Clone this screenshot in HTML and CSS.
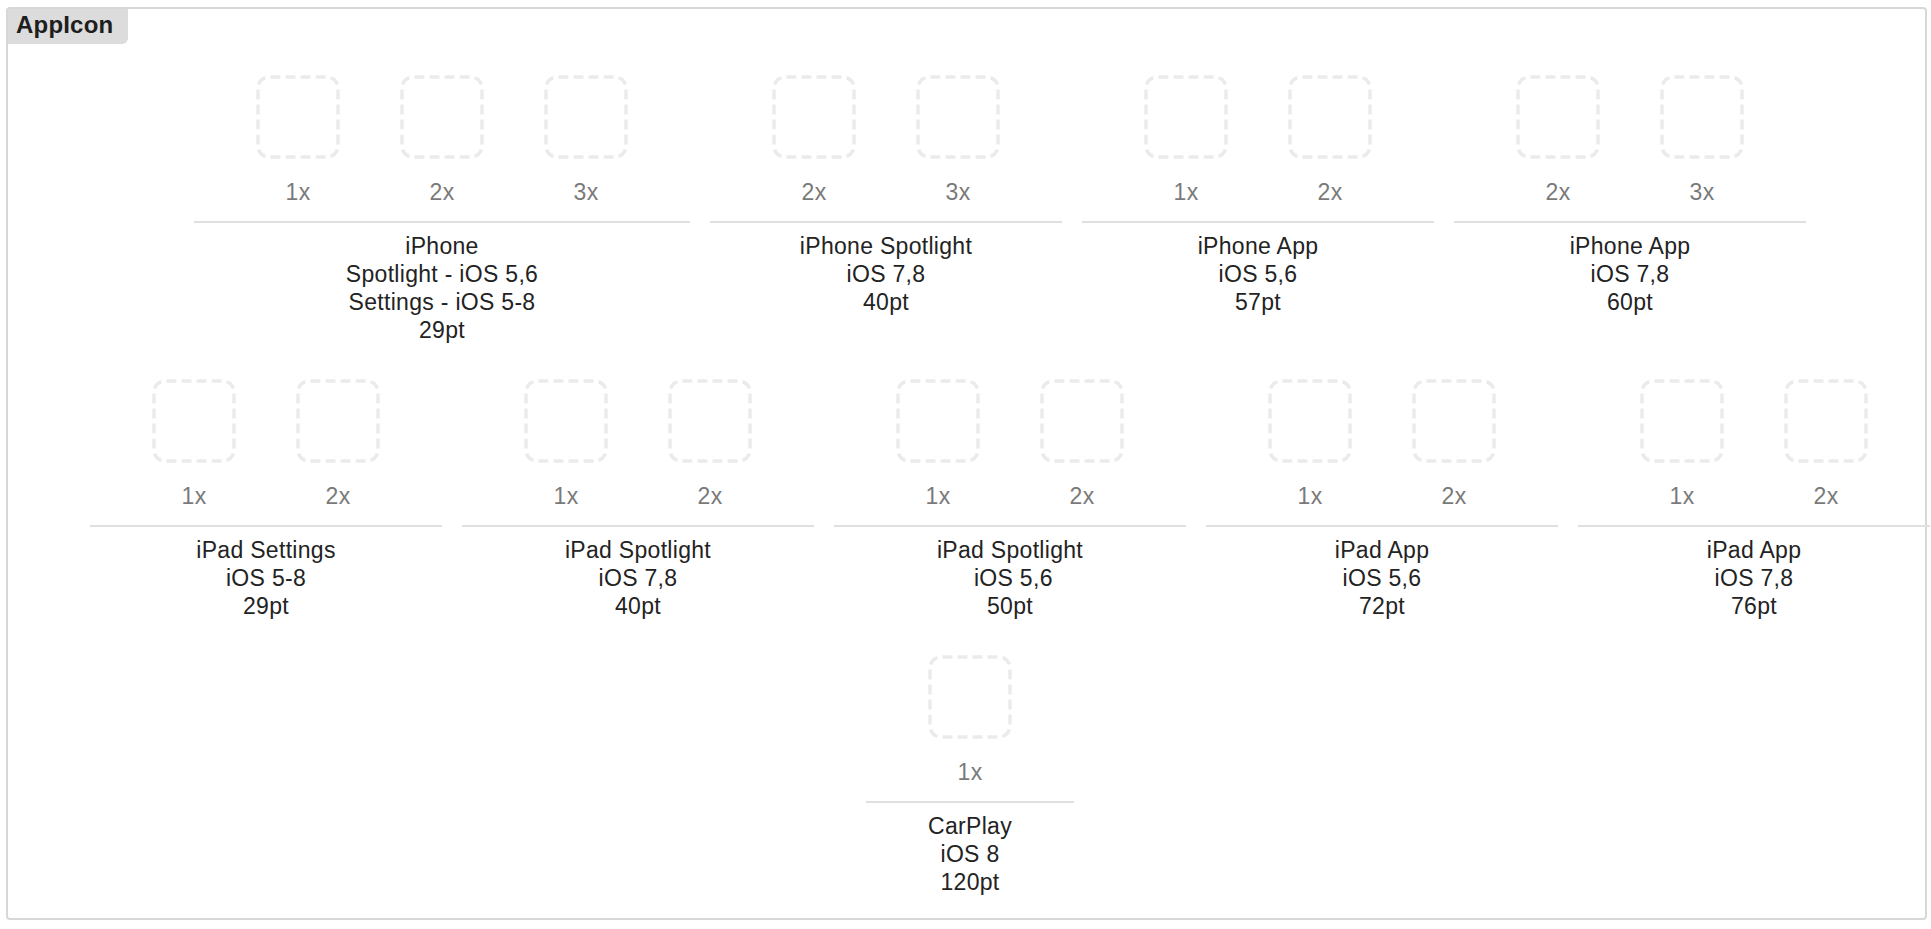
FILE: index.html
```html
<!DOCTYPE html>
<html lang="en">
<head>
<meta charset="utf-8">
<title>AppIcon</title>
<link rel="stylesheet" href="styles.css">
</head>
<body>
<svg class="defs" width="0" height="0" aria-hidden="true">
  <defs>
    <symbol id="ph" viewBox="0 0 84 84">
      <rect x="2" y="2" width="80" height="80" rx="11" ry="11" fill="none" stroke="#ebebeb" stroke-width="3.5" pathLength="304" stroke-dasharray="10 5.2" stroke-dashoffset="13.7"/>
    </symbol>
  </defs>
</svg>
<section class="panel">
  <div class="tab">AppIcon</div>
  <div class="rows">
    <div class="row row-1">
      <div class="group">
        <div class="icons">
          <div class="slot"><svg class="ph"><use href="#ph"/></svg><span class="scale">1x</span></div>
          <div class="slot"><svg class="ph"><use href="#ph"/></svg><span class="scale">2x</span></div>
          <div class="slot"><svg class="ph"><use href="#ph"/></svg><span class="scale">3x</span></div>
        </div>
        <div class="caption">iPhone<br>Spotlight - iOS 5,6<br>Settings - iOS 5-8<br>29pt</div>
      </div>
      <div class="group">
        <div class="icons">
          <div class="slot"><svg class="ph"><use href="#ph"/></svg><span class="scale">2x</span></div>
          <div class="slot"><svg class="ph"><use href="#ph"/></svg><span class="scale">3x</span></div>
        </div>
        <div class="caption">iPhone Spotlight<br>iOS 7,8<br>40pt</div>
      </div>
      <div class="group">
        <div class="icons">
          <div class="slot"><svg class="ph"><use href="#ph"/></svg><span class="scale">1x</span></div>
          <div class="slot"><svg class="ph"><use href="#ph"/></svg><span class="scale">2x</span></div>
        </div>
        <div class="caption">iPhone App<br>iOS 5,6<br>57pt</div>
      </div>
      <div class="group">
        <div class="icons">
          <div class="slot"><svg class="ph"><use href="#ph"/></svg><span class="scale">2x</span></div>
          <div class="slot"><svg class="ph"><use href="#ph"/></svg><span class="scale">3x</span></div>
        </div>
        <div class="caption">iPhone App<br>iOS 7,8<br>60pt</div>
      </div>
    </div>
    <div class="row row-2">
      <div class="group">
        <div class="icons">
          <div class="slot"><svg class="ph"><use href="#ph"/></svg><span class="scale">1x</span></div>
          <div class="slot"><svg class="ph"><use href="#ph"/></svg><span class="scale">2x</span></div>
        </div>
        <div class="caption">iPad Settings<br>iOS 5-8<br>29pt</div>
      </div>
      <div class="group">
        <div class="icons">
          <div class="slot"><svg class="ph"><use href="#ph"/></svg><span class="scale">1x</span></div>
          <div class="slot"><svg class="ph"><use href="#ph"/></svg><span class="scale">2x</span></div>
        </div>
        <div class="caption">iPad Spotlight<br>iOS 7,8<br>40pt</div>
      </div>
      <div class="group">
        <div class="icons">
          <div class="slot"><svg class="ph"><use href="#ph"/></svg><span class="scale">1x</span></div>
          <div class="slot"><svg class="ph"><use href="#ph"/></svg><span class="scale">2x</span></div>
        </div>
        <div class="caption">iPad Spotlight<br>&nbsp;iOS 5,6<br>50pt</div>
      </div>
      <div class="group">
        <div class="icons">
          <div class="slot"><svg class="ph"><use href="#ph"/></svg><span class="scale">1x</span></div>
          <div class="slot"><svg class="ph"><use href="#ph"/></svg><span class="scale">2x</span></div>
        </div>
        <div class="caption">iPad App<br>iOS 5,6<br>72pt</div>
      </div>
      <div class="group">
        <div class="icons">
          <div class="slot"><svg class="ph"><use href="#ph"/></svg><span class="scale">1x</span></div>
          <div class="slot"><svg class="ph"><use href="#ph"/></svg><span class="scale">2x</span></div>
        </div>
        <div class="caption">iPad App<br>iOS 7,8<br>76pt</div>
      </div>
    </div>
    <div class="row row-3">
      <div class="group">
        <div class="icons">
          <div class="slot"><svg class="ph"><use href="#ph"/></svg><span class="scale">1x</span></div>
        </div>
        <div class="caption">CarPlay<br>iOS 8<br>120pt</div>
      </div>
    </div>
  </div>
</section>
</body>
</html>
```

FILE: styles.css
```css
html, body {
  margin: 0;
  padding: 0;
  background: #ffffff;
}

body {
  font-family: "Liberation Sans", Helvetica, Arial, sans-serif;
  color: #222222;
  overflow: hidden;
}

.defs {
  position: absolute;
  width: 0;
  height: 0;
}

.panel {
  margin: 7px 4px 0 6px;
  border: 2px solid #d7d7d7;
  border-radius: 4px;
  padding-bottom: 22px;
}

.tab {
  display: inline-block;
  vertical-align: top;
  background: #dcdcdc;
  border-bottom-right-radius: 6px;
  padding: 0 15px 4px 8px;
  font-size: 24px;
  line-height: 31px;
  font-weight: bold;
  letter-spacing: 0.2px;
  color: #1e1e1e;
}

.rows {
  display: flex;
  flex-direction: column;
  gap: 35px;
  margin-top: 31px;
}

.row {
  display: flex;
  gap: 20px;
}

.row-1 { padding-left: 186px; }
.row-2 { padding-left: 82px; }
.row-3 { padding-left: 858px; }

.group {
  flex: none;
}

.icons {
  display: flex;
  padding: 0 32px 15px;
  border-bottom: 2px solid #e0e0e0;
}

.slot {
  width: 144px;
  display: flex;
  flex-direction: column;
  align-items: center;
}

.ph {
  display: block;
  width: 84px;
  height: 84px;
  margin-bottom: 19px;
}

.scale {
  font-size: 23px;
  line-height: 28px;
  color: #7a7a7a;
  letter-spacing: 0.3px;
}

.caption {
  padding-top: 9px;
  text-align: center;
  font-size: 23px;
  line-height: 28px;
  letter-spacing: 0.3px;
  color: #232323;
}
```
